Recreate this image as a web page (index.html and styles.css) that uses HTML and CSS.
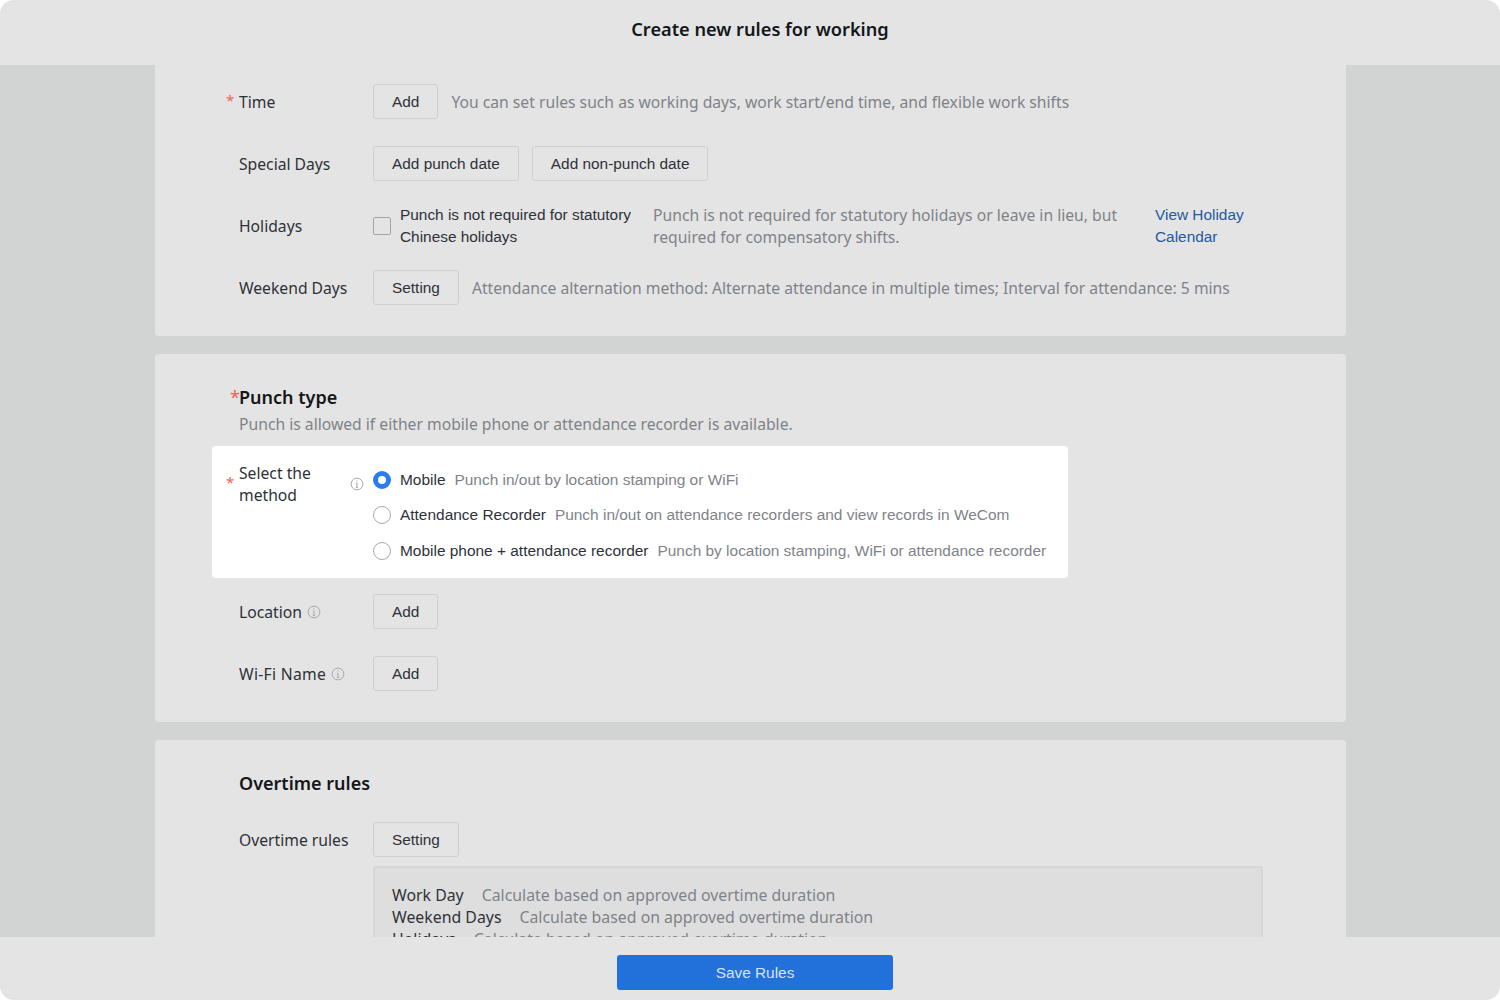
FILE: index.html
```html
<!DOCTYPE html>
<html lang="en">

<head>
  <meta charset="UTF-8">
  <title>Create new rules for working</title>
  <link rel="stylesheet" href="styles.css">
</head>

<body>
  <div class="window">
    <header class="top-bar">
      <h1>Create new rules for working</h1>
    </header>

    <main class="content">
      <section class="card card-time">
        <div class="row">
          <div class="label"><span class="star">*</span>Time</div>
          <div class="field">
            <a href="#" class="btn">Add</a>
            <span class="hint">You can set rules such as working days, work start/end time, and flexible work shifts</span>
          </div>
        </div>
        <div class="row">
          <div class="label">Special Days</div>
          <div class="field">
            <a href="#" class="btn">Add punch date</a>
            <a href="#" class="btn">Add non-punch date</a>
          </div>
        </div>
        <div class="row">
          <div class="label">Holidays</div>
          <div class="field">
            <span class="checkbox"></span>
            <span class="check-text">Punch is not required for statutory Chinese holidays</span>
            <span class="hint holiday-hint">Punch is not required for statutory holidays or leave in lieu, but required for compensatory shifts.</span>
            <a href="#" class="link">View Holiday Calendar</a>
          </div>
        </div>
        <div class="row">
          <div class="label">Weekend Days</div>
          <div class="field">
            <a href="#" class="btn">Setting</a>
            <span class="hint">Attendance alternation method: Alternate attendance in multiple times; Interval for attendance: 5 mins</span>
          </div>
        </div>
      </section>

      <section class="card card-punch">
        <h2 class="card-title"><span class="title-star">*</span>Punch type</h2>
        <p class="sub">Punch is allowed if either mobile phone or attendance recorder is available.</p>

        <div class="method-box">
          <div class="method-label">
            <span class="star">*</span>
            <span class="method-name">Select the method</span>
            <svg class="info" viewBox="0 0 14 14"><circle cx="7" cy="7" r="5.9" /><path d="M7 6v4.4M5.9 6.2H7M5.9 10.4h2.2M7 3.6v1.2" /></svg>
          </div>
          <div class="options">
            <div class="option">
              <span class="radio radio-on"></span>
              <span class="option-name">Mobile</span>
              <span class="option-desc">Punch in/out by location stamping or WiFi</span>
            </div>
            <div class="option">
              <span class="radio"></span>
              <span class="option-name">Attendance Recorder</span>
              <span class="option-desc">Punch in/out on attendance recorders and view records in WeCom</span>
            </div>
            <div class="option">
              <span class="radio"></span>
              <span class="option-name">Mobile phone + attendance recorder</span>
              <span class="option-desc">Punch by location stamping, WiFi or attendance recorder</span>
            </div>
          </div>
        </div>

        <div class="row">
          <div class="label">Location
            <svg class="info" viewBox="0 0 14 14"><circle cx="7" cy="7" r="5.9" /><path d="M7 6v4.4M5.9 6.2H7M5.9 10.4h2.2M7 3.6v1.2" /></svg>
          </div>
          <div class="field"><a href="#" class="btn">Add</a></div>
        </div>
        <div class="row">
          <div class="label label-wifi">Wi-Fi Name
            <svg class="info" viewBox="0 0 14 14"><circle cx="7" cy="7" r="5.9" /><path d="M7 6v4.4M5.9 6.2H7M5.9 10.4h2.2M7 3.6v1.2" /></svg>
          </div>
          <div class="field"><a href="#" class="btn">Add</a></div>
        </div>
      </section>

      <section class="card card-overtime">
        <h2 class="card-title">Overtime rules</h2>
        <div class="row row-tight">
          <div class="label">Overtime rules</div>
          <div class="field"><a href="#" class="btn">Setting</a></div>
        </div>
        <div class="summary">
          <p><span class="summary-name">Work Day</span><span class="summary-desc">Calculate based on approved overtime duration</span></p>
          <p><span class="summary-name">Weekend Days</span><span class="summary-desc">Calculate based on approved overtime duration</span></p>
          <p><span class="summary-name">Holidays</span><span class="summary-desc">Calculate based on approved overtime duration</span></p>
        </div>
      </section>
    </main>

    <footer class="bottom-bar">
      <a href="#" class="btn-save">Save Rules</a>
    </footer>
  </div>
</body>

</html>
```

FILE: styles.css
```css
html,
body,
h1,
h2,
p {
  margin: 0;
  padding: 0;
}

body {
  background: #fff;
  font-family: "Noto Sans", "Open Sans", sans-serif;
  font-size: 15.7px;
  color: #2e3238;
}

a {
  text-decoration: none;
}

.window {
  width: 1500px;
  height: 1000px;
  display: flex;
  flex-direction: column;
  overflow: hidden;
  border-radius: 14px;
  background: #e4e4e4;
}

.top-bar {
  height: 65px;
  flex: none;
  padding-top: 17px;
  padding-left: 20px;
  box-sizing: border-box;
  text-align: center;
}

.top-bar h1 {
  font-size: 18.2px;
  line-height: 25px;
  font-weight: 600;
  color: #14171a;
}

.content {
  flex: 1;
  overflow: hidden;
  background: #d2d4d3;
  padding: 0 154px 0 155px;
}

.card {
  background: #e4e4e4;
  border-radius: 4px;
  padding: 0 84px;
  margin-bottom: 18px;
}

.card-time {
  padding-top: 19px;
  padding-bottom: 4px;
  border-radius: 0 0 4px 4px;
}

.card-punch {
  padding-top: 31px;
  padding-bottom: 4px;
}

.card-overtime {
  padding-top: 31px;
  padding-bottom: 40px;
}

.row {
  display: flex;
  align-items: center;
  height: 35px;
  margin-bottom: 27px;
}

.card-overtime .row {
  margin-top: 27px;
}

.card-overtime .row-tight {
  margin-bottom: 9px;
}

.label {
  position: relative;
  width: 134px;
  flex: none;
  display: flex;
  align-items: center;
  gap: 5px;
  color: #2e3238;
}

.label-wifi {
  letter-spacing: 0.3px;
}

.star {
  position: absolute;
  left: -13px;
  top: -1px;
  color: #f0625d;
  font-size: 15px;
}

.field {
  display: flex;
  align-items: center;
  gap: 13px;
  flex: 1;
}

.btn {
  display: inline-block;
  box-sizing: border-box;
  height: 35px;
  line-height: 34px;
  padding: 0 18px;
  border: 1px solid #cfcfcf;
  border-radius: 3px;
  font-family: "Liberation Sans", Arial, sans-serif;
  font-size: 15.4px;
  color: #2e3238;
  white-space: nowrap;
}

.hint,
.sub {
  color: #7f8389;
  font-size: 15.7px;
  white-space: nowrap;
}

.checkbox {
  width: 16px;
  height: 16px;
  flex: none;
  border: 1px solid #a4a4a4;
  border-radius: 2px;
}

.check-text {
  width: 240px;
  margin-left: -4px;
  flex: none;
  font-family: "Liberation Sans", Arial, sans-serif;
  font-size: 15.4px;
  line-height: 22px;
  color: #2e3238;
}

.holiday-hint {
  width: 489px;
  flex: none;
  white-space: normal;
  line-height: 22px;
}

.link {
  width: 110px;
  flex: none;
  font-family: "Liberation Sans", Arial, sans-serif;
  font-size: 15.4px;
  line-height: 22px;
  color: #25599f;
}

.card-title {
  font-size: 18px;
  line-height: 24px;
  font-weight: 600;
  color: #14171a;
  position: relative;
}

.title-star {
  position: absolute;
  left: -9px;
  top: 0;
  color: #f0625d;
  font-weight: 400;
}

.sub {
  line-height: 22px;
  margin-top: 4px;
}

.method-box {
  display: flex;
  width: 856px;
  height: 132px;
  box-sizing: border-box;
  margin: 11px 0 16px -27px;
  padding: 16px 0 0 27px;
  background: #fff;
  border-radius: 4px;
}

.method-label {
  position: relative;
  width: 134px;
  flex: none;
  align-self: flex-start;
}

.method-label .star {
  top: 10px;
}

.method-name {
  display: block;
  width: 90px;
  line-height: 22px;
}

.method-label .info {
  position: absolute;
  left: 111px;
  top: 15px;
}

.options {
  display: flex;
  flex-direction: column;
  gap: 17.5px;
  padding-top: 8.5px;
}

.option {
  display: flex;
  align-items: center;
  height: 18px;
  font-family: "Liberation Sans", Arial, sans-serif;
  font-size: 15.45px;
  white-space: nowrap;
}

.radio {
  width: 16px;
  height: 16px;
  flex: none;
  margin-right: 9px;
  border: 1px solid #a8a8a8;
  border-radius: 50%;
  background: #fff;
}

.radio-on {
  border: 5px solid #2a7cf0;
  width: 8px;
  height: 8px;
}

.option-name {
  color: #2e3238;
  margin-right: 9px;
}

.option-desc {
  color: #7f8389;
}

.info {
  width: 14px;
  height: 14px;
  flex: none;
  fill: none;
  stroke: #a9a9a9;
  stroke-width: 1;
}

.summary {
  margin-left: 134px;
  box-sizing: border-box;
  width: 890px;
  padding: 16px 17px;
  background: #dedede;
  border: 2px solid #d6d6d6;
  border-radius: 4px;
  font-size: 15.85px;
}

.summary p {
  line-height: 22px;
  white-space: nowrap;
}

.summary-name {
  margin-right: 18px;
  color: #2e3238;
}

.summary-desc {
  color: #7f8389;
}

.bottom-bar {
  height: 63px;
  flex: none;
  box-sizing: border-box;
  padding-top: 18px;
  padding-left: 10px;
  text-align: center;
}

.btn-save {
  display: inline-block;
  width: 276px;
  height: 35px;
  line-height: 35px;
  background: #2270da;
  border-radius: 3px;
  font-family: "Liberation Sans", Arial, sans-serif;
  font-size: 15.4px;
  color: #d6e5f8;
}
```
